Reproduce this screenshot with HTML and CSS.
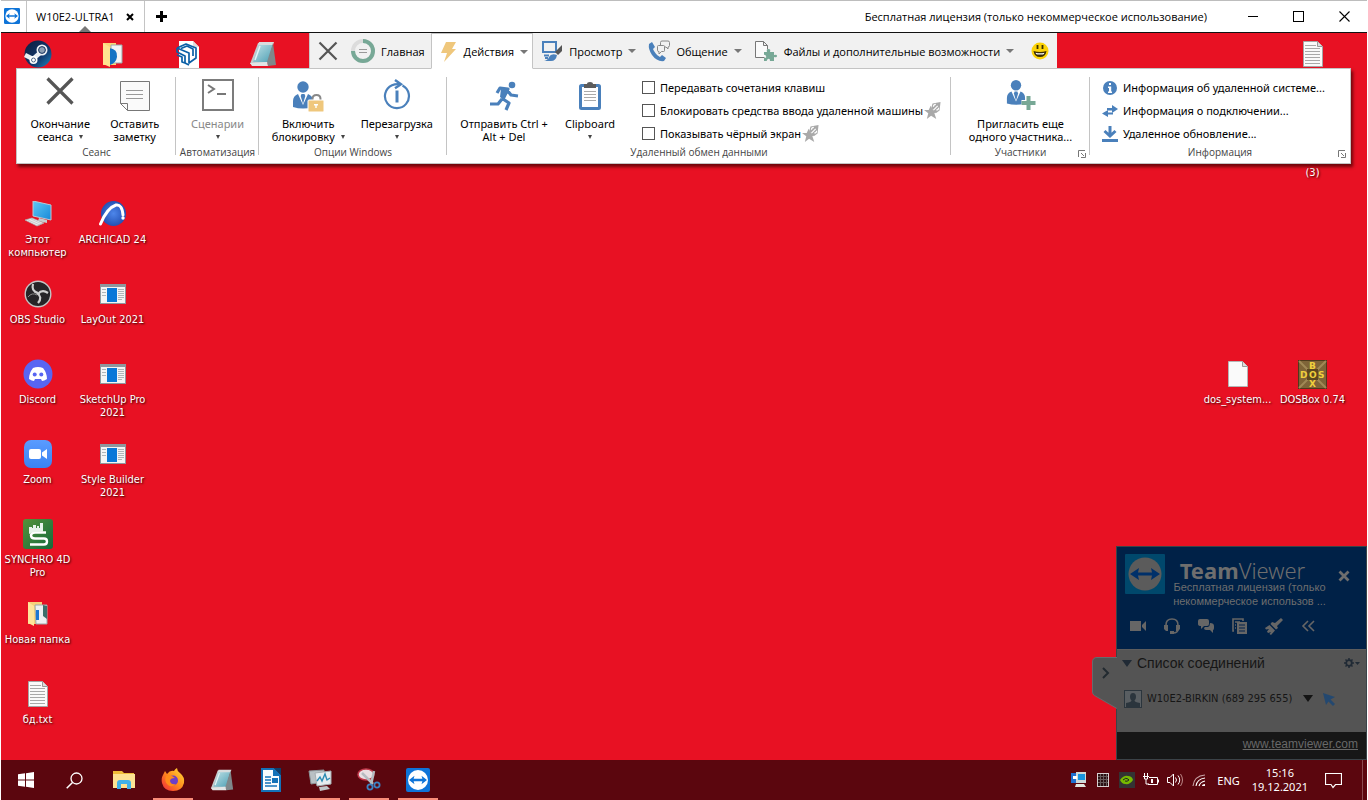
FILE: index.html
```html
<!DOCTYPE html>
<html lang="ru">
<head>
<meta charset="utf-8">
<title>W10E2-ULTRA1</title>
<link rel="stylesheet" href="styles.css">
</head>
<body>
<svg class="defs" aria-hidden="true">
  <defs>
    <linearGradient id="discGrad" x1="0" y1="0" x2="1" y2="1"><stop offset="0" stop-color="#0d1c3c"/><stop offset=".6" stop-color="#12386c"/><stop offset="1" stop-color="#1b8ac4"/></linearGradient>
    <linearGradient id="screenGrad" x1="0" y1="0" x2="1" y2="1"><stop offset="0" stop-color="#5fc8f5"/><stop offset="1" stop-color="#1788d8"/></linearGradient>
    <linearGradient id="noteGrad" x1="0" y1="0" x2="1" y2="1"><stop offset="0" stop-color="#c4e4e8"/><stop offset="1" stop-color="#4d9fb4"/></linearGradient>
    <linearGradient id="zoomGrad" x1="0" y1="0" x2="0" y2="1"><stop offset="0" stop-color="#5a9cff"/><stop offset="1" stop-color="#3a82f2"/></linearGradient>
    <linearGradient id="foxGrad" x1="1" y1="0" x2="0" y2="1"><stop offset="0" stop-color="#ffe03a"/><stop offset=".5" stop-color="#ff8a1c"/><stop offset="1" stop-color="#f0243f"/></linearGradient>
    <linearGradient id="synGrad" x1="0" y1="0" x2="1" y2="1"><stop offset="0" stop-color="#55923a"/><stop offset="1" stop-color="#156a3c"/></linearGradient>
    <radialGradient id="archGrad"><stop offset="0" stop-color="#4d86ea"/><stop offset="1" stop-color="#2451b4"/></radialGradient>
  </defs>
  <symbol id="logo" viewBox="0 0 24 24"><rect width="24" height="24" rx="2" fill="#0e74d8"/><circle cx="12" cy="12" r="10" fill="#fff"/><path d="M3 12l5.500-4.200-.9 3h8.800l-.9-3L21 12l-5.500 4.200.9-3H7.600l.9 3z" fill="#0e74d8"/></symbol>
  <symbol id="appwin" viewBox="0 0 26 20"><rect x=".5" y=".5" width="25" height="19" fill="#f4f4f4" stroke="#8e979d"/><path d="M1 2h24" stroke="#8e979d" stroke-width="2"/><rect x="7" y="4" width="10" height="14" fill="#0a78d8"/><path d="M2 5.500h4M2 8.500h4M2 11.500h4M18 5.500h6M18 7.500h6M18 9.500h6M18 11.500h6M18 13.500h6M18 15.500h4" stroke="#b0b5b8"/></symbol>
  <symbol id="textfile" viewBox="0 0 20 26"><path d="M.5.5h14l5 5v20H.5z" fill="#fafafa" stroke="#a5a5a5"/><path d="M14.500.5v5h5" fill="#ddd" stroke="#999"/><path d="M2 4.500h11M2 7.500h15M2 10.500h15M2 13.500h15M2 16.500h15M2 19.500h15M2 22.500h15" stroke="#a9a9a9"/></symbol>
  <symbol id="notepad" viewBox="0 0 28 28"><path d="M9 3h13l-3 20L1 24z" fill="#c5c9cb"/><path d="M10 4h14l-5 18H4z" fill="url(#noteGrad)"/><path d="M10 2h15l-1 3H9z" fill="#d9dcdd"/><path d="M24 3l3 22-8 1-1-4z" fill="#7f878a"/><path d="M1 23l17-1 1 4H3z" fill="#e2e4e4"/><path d="M11 6l-5 14" stroke="#e4f4f5" stroke-width="1.500"/></symbol>
  <symbol id="user" viewBox="0 0 22 28"><circle cx="11" cy="6" r="5.700" fill="#4a80bb"/><path d="M1 26v-6q0-5 5-7l5 11 5-11q5 2 5 7v6q-10 3-20 0z" fill="#4a80bb"/><path d="M9.500 13h3l.8 2-2.300 8-2.300-8z" fill="#4a80bb"/></symbol>
  <symbol id="launch" viewBox="0 0 8 8"><path d="M.5 7V.5H7" fill="none" stroke="#777"/><path d="M3 3l3 3M7.500 3v4.500H3" fill="none" stroke="#777"/></symbol>
  <symbol id="nostar" viewBox="0 0 18 18"><path d="M7 4l2 4.500h6L11 12l2 6-5.500-3.500L3 18l1.500-6L0 8.500h5z" fill="#a9a9a9"/><path d="M9 1.500L17.500 0l-1 9-4 3-5-5z" fill="#a9a9a9"/><path d="M10 8.500L14.500 4M10 5q0-2.500 2.500-2.500M15.500 6q0 2.500-2.500 2.500" stroke="#fff" stroke-width="1.200" fill="none"/></symbol>
</svg>

<header class="titlebar">
  <svg class="app-logo" width="16" height="16"><use href="#logo"/></svg>
  <div class="session-tab">
    <span>W10E2-ULTRA1</span>
    <button class="plain" aria-label="Закрыть вкладку"><svg width="8" height="8"><path d="M1 1l6 6M7 1L1 7" stroke="#000" stroke-width="2"/></svg></button>
  </div>
  <button class="plain add" aria-label="Новая вкладка"><svg width="11" height="11"><path d="M5.500 0v11M0 5.500h11" stroke="#000" stroke-width="3"/></svg></button>
  <p class="license">Бесплатная лицензия (только некоммерческое использование)</p>
  <button class="plain win" aria-label="Свернуть"><svg width="11" height="11"><path d="M1 5.500h10" stroke="#000"/></svg></button>
  <button class="plain win" aria-label="Развернуть"><svg width="11" height="11"><rect x=".5" y=".5" width="10" height="10" fill="none" stroke="#000"/></svg></button>
  <button class="plain win" aria-label="Закрыть"><svg width="11" height="11"><path d="M.5.5l10 10M10.500.5l-10 10" stroke="#000" stroke-width="1.100"/></svg></button>
</header>

<main class="desktop">
  <section class="icons left-icons">
    <figure class="r1 c1"><svg width="28" height="28" viewBox="0 0 28 28"><circle cx="14" cy="14" r="13.500" fill="url(#discGrad)"/><path d="M1 15l8 4 8-7" stroke="#e9eef3" stroke-width="4.500" fill="none"/><circle cx="9.500" cy="20" r="4" fill="#fff"/><circle cx="18" cy="10" r="5.500" fill="#eef2f5"/><circle cx="18" cy="10" r="3.400" fill="#8d9fb3" stroke="#12305c"/><circle cx="9.500" cy="20" r="2" fill="#fff" stroke="#27476f" stroke-width=".8"/></svg></figure>
    <figure class="r1 c2"><svg width="20" height="26" viewBox="0 0 20 26"><path d="M0 2h13v22H0z" fill="#fbd777"/><path d="M8 4h11v18H8z" fill="#f2f4f5" stroke="#9aa"/><path d="M6 7q9 1 8 9-1 6-7 8z" fill="#1272c4"/><path d="M0 2l7 4v20l-7-3z" fill="#ffe391"/></svg></figure>
    <figure class="r1 c3"><svg width="24" height="28" viewBox="0 0 24 28"><path d="M3 1h14l6 6v21H3z" fill="#fff"/><path d="M17 1v6h6" fill="#ddd"/><g fill="none" stroke="#0a5fa6" stroke-width="1.700" stroke-linejoin="round"><path d="M1 8l9-4 10 4v10l-7 5v-4"/><path d="M1 8v4l8 4v7l4 2M1 8l12 5v6M5 8.500l6-2.500 6 3v7M1 15l5 2v5l3 1"/></g></svg></figure>
    <figure class="r1 c4"><svg width="28" height="28"><use href="#notepad"/></svg></figure>

    <figure class="r3 c1"><svg width="28" height="26" viewBox="0 0 28 26"><path d="M9 0l18 4v15L9 15z" fill="url(#screenGrad)" stroke="#b7cbd6"/><path d="M15 17l8 2v3l-9-2z" fill="#c7ccce"/><path d="M1 19l7-2 12 5-7 3z" fill="#e7e9ea" stroke="#a8adb0" stroke-width=".7"/><path d="M4 19l12 5M7 18l11 5" stroke="#b4b9bb" stroke-width=".6"/></svg><figcaption>Этот компьютер</figcaption></figure>
    <figure class="r4 c1"><svg width="28" height="28" viewBox="0 0 28 28"><circle cx="14" cy="14" r="12.800" fill="#262427" stroke="#c4c4c4" stroke-width="1.400"/><g fill="none" stroke="#cfcfcf" stroke-width="2.200"><path d="M9 4q-2 7 5 9"/><path d="M24 13q-6-4-10 1"/><path d="M13 13q6 4 1 10"/></g><path d="M4 17q4-5 9-2" stroke="#8a8a8a" fill="none"/></svg><figcaption>OBS Studio</figcaption></figure>
    <figure class="r5 c1"><svg width="30" height="30" viewBox="0 0 30 30"><circle cx="15" cy="15" r="14.500" fill="#5865f2"/><path d="M10 9q5-2 10 0 4 5 4 11-3 2-5 2l-1-2h-6l-1 2q-2 0-5-2 0-6 4-11z" fill="#fff"/><circle cx="11.700" cy="15.500" r="2" fill="#5865f2"/><circle cx="18.300" cy="15.500" r="2" fill="#5865f2"/></svg><figcaption>Discord</figcaption></figure>
    <figure class="r6 c1"><svg width="28" height="28" viewBox="0 0 28 28"><rect width="28" height="28" rx="7" fill="url(#zoomGrad)"/><rect x="5" y="9" width="12" height="10" rx="2" fill="#fff"/><path d="M18 12.500l5-3.500v10l-5-3.500z" fill="#fff"/></svg><figcaption>Zoom</figcaption></figure>
    <figure class="r7 c1"><svg width="30" height="30" viewBox="0 0 30 30"><rect width="30" height="30" rx="3" fill="url(#synGrad)"/><path d="M23 13.500H12q-4 0-4 3t4 3h9q3 0 3 3T21 25.500H7" fill="none" stroke="#fff" stroke-width="2.400"/><path d="M6 15V8h3v1h1V6h3v3h1V7h2v2h1V4h3v9h-8q-4 0-6 2z" fill="#e8f2ea"/></svg><figcaption>SYNCHRO 4D Pro</figcaption></figure>
    <figure class="r8 c1"><svg width="20" height="26" viewBox="0 0 20 26"><path d="M0 1h14v22H0z" fill="#f6d27a"/><path d="M7 4h12v19H8z" fill="#eef1f2" stroke="#9aa"/><path d="M15 4l4 1v13l-4-3z" fill="#3c6f6b"/><path d="M8 9h3v10H8z" fill="#1d78d2"/><path d="M0 1l6 4v20l-6-3z" fill="#ffe59b"/></svg><figcaption>Новая папка</figcaption></figure>
    <figure class="r9 c1"><svg width="20" height="26"><use href="#textfile"/></svg><figcaption>бд.txt</figcaption></figure>

    <figure class="r3 c2"><svg width="28" height="28" viewBox="0 0 28 28"><circle cx="14.500" cy="13.500" r="12.500" fill="url(#archGrad)"/><path d="M1.500 24Q8 8 17 5q6-1 7 10" fill="none" stroke="#fff" stroke-width="3" stroke-linecap="round"/><circle cx="24" cy="18" r="1.700" fill="#fff"/></svg><figcaption>ARCHICAD 24</figcaption></figure>
    <figure class="r4 c2"><svg width="26" height="20"><use href="#appwin"/></svg><figcaption>LayOut 2021</figcaption></figure>
    <figure class="r5 c2"><svg width="26" height="20"><use href="#appwin"/></svg><figcaption>SketchUp Pro 2021</figcaption></figure>
    <figure class="r6 c2"><svg width="26" height="20"><use href="#appwin"/></svg><figcaption>Style Builder 2021</figcaption></figure>
  </section>

  <section class="icons right-icons">
    <figure class="r1 c2"><svg width="20" height="26"><use href="#textfile"/></svg></figure>
    <figure class="r2 c2 tail"><figcaption>(3)</figcaption></figure>
    <figure class="r5 c1"><svg width="20" height="26" viewBox="0 0 20 26"><path d="M.5.5h14l5 5v20H.5z" fill="#fafafa" stroke="#b5b5b5"/><path d="M14.500.5v5h5" fill="#ddd" stroke="#999"/></svg><figcaption>dos_system...</figcaption></figure>
    <figure class="r5 c2"><svg class="dosbox" width="29" height="29" viewBox="0 0 29 29"><rect x=".5" y=".5" width="28" height="28" fill="#7e6438" stroke="#4d3a1c"/><path d="M1 1l27 27M28 1L1 28" stroke="#a08955" stroke-width="2"/><rect x="9" y="9" width="11" height="11" fill="#5c471f"/><text x="11" y="9">B</text><text x="2" y="18">D</text><text x="11" y="18">O</text><text x="20" y="18">S</text><text x="11" y="27">X</text></svg><figcaption>DOSBox 0.74</figcaption></figure>
  </section>

  <nav class="tabs">
    <button class="tab tab-close" aria-label="Закрыть"><svg width="20" height="20" viewBox="0 0 20 20"><path d="M1.500 1.500l17 17M18.500 1.500l-17 17" stroke="#555" stroke-width="2.200"/></svg></button>
    <button class="tab home"><svg width="24" height="24" viewBox="0 0 24 24"><circle cx="12" cy="12" r="10" fill="none" stroke="#dcdcdc" stroke-width="4"/><path d="M12 2a10 10 0 1 1-10 10" fill="none" stroke="#77a896" stroke-width="4"/><path d="M8 10.500h8M8 13.500h8" stroke="#999"/></svg><span>Главная</span></button>
    <button class="tab active"><svg width="18" height="20" viewBox="0 0 18 20"><path d="M6 0h10l-4 7h4L4 20l3-9H1z" fill="#efc77c"/></svg><span>Действия</span><i class="caret"></i></button>
    <button class="tab"><svg width="22" height="22" viewBox="0 0 22 22"><rect x="2" y="2" width="13" height="10" fill="none" stroke="#4a80bb" stroke-width="2"/><path d="M3 21q4-1 5-4 2-4 8-2-1 6-6 6z" fill="#4a80bb"/><path d="M3 15.500h5M4 18h3" stroke="#4a80bb" stroke-width="2"/><path d="M14 12l7-7v6l-4 4z" fill="#555"/></svg><span>Просмотр</span><i class="caret"></i></button>
    <button class="tab"><svg width="22" height="22" viewBox="0 0 22 22"><path d="M1 4l3-2 3 5-2 2q2 5 7 8l2-2 4 3-2 3Q9 22 4 15 0 9 1 4z" fill="#4a80bb"/><g fill="#f1f1f1" stroke="#888"><path d="M12.500 2.500q0-1.500 1.500-1.500h6q1.500 0 1.500 1.500v3Q21.500 7 20 7v2l-2-2h-4q-1.500 0-1.500-1.500z"/><path d="M9.500 6.500q0-1 1-1h5q1 0 1 1v4q0 1-1 1h-2L11 14v-2.500q-1.500 0-1.500-1z"/></g></svg><span>Общение</span><i class="caret"></i></button>
    <button class="tab"><svg width="24" height="22" viewBox="0 0 24 22"><path d="M10.500 17.500h-9v-16h8l4 4v4M9.500 1.500v4h4" fill="#fafafa" stroke="#777"/><path d="M10 12h3q-1-3 1.500-3t1.500 3h4v3q3-1 3 1t-3 1v4h-4q0-3-2-2t-1 2h-3v-3q3 0 2-2t-2-1z" fill="#77a896"/></svg><span>Файлы и дополнительные возможности</span><i class="caret"></i></button>
    <button class="tab smile" aria-label="Отзыв"><svg width="18" height="18" viewBox="0 0 18 18"><circle cx="9" cy="9" r="8.500" fill="#fcd307"/><path d="M6.500 3v4M11.500 3v4" stroke="#3b3000" stroke-width="1.800"/><path d="M2.500 9q1 6 6.500 6t6.500-6q-6.500 2-13 0z" fill="#3b2c00"/><path d="M4.500 10.700q4.500 1.200 9 0-.5 1.400-1.500 1.800H6q-1-.4-1.500-1.800z" fill="#fff"/></svg></button>
  </nav>

  <section class="ribbon">
    <div class="group g-session">
      <div class="tools">
        <button class="big"><svg width="28" height="28" viewBox="0 0 28 28"><path d="M1.500 1.500l25 25M26.500 1.500l-25 25" stroke="#555" stroke-width="3.200"/></svg><span>Окончание<br>сеанса<i class="dot"></i></span></button>
        <button class="big"><svg class="low" width="30" height="30" viewBox="0 0 30 30"><path d="M.5.5h29v29h-22l-7-7z" fill="#fafafa" stroke="#777"/><path d="M.5 22.500h7v7" fill="none" stroke="#777"/><path d="M6 9.500h17M6 13.500h17M6 17.500h17" stroke="#999"/></svg><span>Оставить<br>заметку</span></button>
      </div>
      <h2>Сеанс</h2>
    </div>
    <div class="group g-auto">
      <div class="tools">
        <button class="big off"><svg class="mid" width="32" height="32" viewBox="0 0 32 32"><rect x="1" y="1" width="30" height="30" fill="#fff" stroke="#7c7c7c" stroke-width="2"/><path d="M6 6l6 4-6 4M15 15h9" fill="none" stroke="#777" stroke-width="2"/></svg><span>Сценарии<br><i class="dot alone"></i></span></button>
      </div>
      <h2>Автоматизация</h2>
    </div>
    <div class="group g-windows">
      <div class="tools">
        <button class="big"><svg class="low" width="32" height="32" viewBox="0 0 32 32"><use href="#user" x="0" y="0" width="22" height="28"/><path d="M20.500 21v-3q0-4 4-4t4 4v3" fill="none" stroke="#888" stroke-width="2"/><rect x="16" y="19" width="16" height="12" rx="1" fill="#efc77c" stroke="#fff"/><path d="M22 23h4v1.500h-1.300V27h-1.400v-2.500H22z" fill="#fff"/></svg><span>Включить<br>блокировку<i class="dot"></i></span></button>
        <button class="big"><svg class="mid" width="28" height="32" viewBox="0 0 28 32"><path d="M19.500 6.500a12 12 0 1 1-10.500-.3Q12 5 16 5.200" fill="none" stroke="#4a80bb" stroke-width="2.200"/><path d="M12 1l6 4.200-6 4" fill="none" stroke="#4a80bb" stroke-width="2.400"/><path d="M14 11.500v12" stroke="#4a80bb" stroke-width="3"/></svg><span>Перезагрузка<br><i class="dot alone"></i></span></button>
      </div>
      <h2>Опции Windows</h2>
    </div>
    <div class="group g-remote">
      <div class="tools">
        <button class="big send"><svg class="low" width="30" height="32" viewBox="0 0 30 32"><circle cx="23" cy="4" r="3.300" fill="#4a80bb"/><path d="M8 12l3-5 8 1-5 10 6 4-3 7M13 18l-4 5H1M18 9l4 5 7 1" fill="none" stroke="#4a80bb" stroke-width="3.200" stroke-linejoin="round"/><path d="M12 8l7 1-4 10-4-3z" fill="#4a80bb"/></svg><span>Отправить Ctrl +<br>Alt + Del</span></button>
        <button class="big clip"><svg class="low" width="22" height="30" viewBox="0 0 22 30"><rect x="1.500" y="4.500" width="19" height="23" rx="1" fill="#fff" stroke="#4a80bb" stroke-width="3"/><path d="M5 3h3q0-2 3-2t3 2h3v4H5z" fill="#5c5c5c"/><path d="M5 10.500h12M5 13.500h12M5 16.500h12M5 19.500h12" stroke="#aaa"/></svg><span>Clipboard<br><i class="dot alone"></i></span></button>
        <div class="stack checks">
          <label><input type="checkbox">Передавать сочетания клавиш</label>
          <label><input type="checkbox">Блокировать средства ввода удаленной машины<svg width="17" height="17"><use href="#nostar"/></svg></label>
          <label><input type="checkbox">Показывать чёрный экран<svg width="17" height="17"><use href="#nostar"/></svg></label>
        </div>
      </div>
      <h2>Удаленный обмен данными</h2>
    </div>
    <div class="group g-people">
      <div class="tools">
        <button class="big"><svg class="mid" width="30" height="32" viewBox="0 0 30 32"><use href="#user" x="0" y="0" width="20" height="27"/><path d="M22.500 17v14M15.500 24h14" stroke="#fff" stroke-width="6"/><path d="M22.500 17v14M15.500 24h14" stroke="#77a896" stroke-width="4"/></svg><span>Пригласить еще<br>одного участника...</span></button>
      </div>
      <h2>Участники</h2>
      <button class="plain launcher" aria-label="Участники: параметры"><svg width="8" height="8"><use href="#launch"/></svg></button>
    </div>
    <div class="group g-info">
      <div class="tools">
        <div class="stack">
          <button class="plain line"><svg width="16" height="16" viewBox="0 0 16 16"><circle cx="8" cy="8" r="7" fill="#4a80bb"/><path d="M7 3h2v2H7zM6 6.500h3.200v5H10V13H6v-1.500h1V8H6z" fill="#fff"/></svg>Информация об удаленной системе...</button>
          <button class="plain line"><svg width="16" height="16" viewBox="0 0 16 16"><path d="M5 5h5V2l6 4-6 4V7.500H5zM11 9.500H6V7L0 10.500 6 14v-2.500h5z" fill="#4a80bb"/></svg>Информация о подключении...</button>
          <button class="plain line"><svg width="16" height="16" viewBox="0 0 16 16"><path d="M0 14.500h16" stroke="#4a80bb" stroke-width="3"/><path d="M8 0v10M2.500 5L8 10l5.500-5" fill="none" stroke="#4a80bb" stroke-width="3"/></svg>Удаленное обновление...</button>
        </div>
      </div>
      <h2>Информация</h2>
      <button class="plain launcher" aria-label="Информация: параметры"><svg width="8" height="8"><use href="#launch"/></svg></button>
    </div>
  </section>

  <aside class="panel">
    <button class="plain handle" aria-label="Свернуть панель"><svg width="25" height="54" viewBox="0 0 25 54"><path d="M25 .5H5Q.5.5.5 5v30q0 2 2 3.500L25 51.500" fill="#545454" stroke="#676b6e"/><path d="M11 11l5 5-5 5" fill="none" stroke="#222a30" stroke-width="2"/></svg></button>
    <div class="panel-head">
      <div class="brand">
        <svg width="40" height="40" viewBox="0 0 40 40"><rect width="40" height="40" rx="1" fill="#00486c"/><circle cx="20" cy="20" r="16.500" fill="#5b5b5b"/><path d="M5 20l9-6-1 4.500h14L26 14l9 6-9 6 1-4.500H13l1 4.500z" fill="#00306a"/></svg>
        <div class="brand-text"><strong>Team<em>Viewer</em></strong><p>Бесплатная лицензия (только<br>некоммерческое использов ...</p></div>
        <button class="plain" aria-label="Закрыть панель"><svg width="12" height="12"><path d="M1.500 1.500l9 9M10.500 1.500l-9 9" stroke="#6e6e6e" stroke-width="2.800"/></svg></button>
      </div>
      <div class="panel-tools">
        <button class="plain" aria-label="Видео"><svg width="18" height="18" viewBox="0 0 18 18"><path d="M1 4h11v10H1zM13 8l4-4v10l-4-4z" fill="#666"/></svg></button>
        <button class="plain" aria-label="Звук"><svg width="18" height="18" viewBox="0 0 18 18"><path d="M3 10V8q0-6 6-6t6 6v2M15 12q0 4-5 4" fill="none" stroke="#666" stroke-width="1.600"/><path d="M1 8h4v6H3l-2-2zM13 8h4v4l-2 2h-2zM7 14h4v3H7z" fill="#666"/></svg></button>
        <button class="plain" aria-label="Чат"><svg width="18" height="18" viewBox="0 0 18 18"><path d="M3 2h7q2 0 2 2v3q0 2-2 2H7l-3 3V9Q1 9 1 7V4q0-2 2-2z" fill="#666"/><path d="M13 6q4 0 4 3v2q0 2-1 2v3l-3-3H9q-2 0-2-2l1-1h3q2-1 2-4z" fill="#666"/></svg></button>
        <button class="plain" aria-label="Файлы"><svg width="18" height="18" viewBox="0 0 18 18"><path d="M3 14H2V2h10v2M4 5h5M4 8h1M4 11h1" fill="none" stroke="#666" stroke-width="1.600"/><path d="M6 5h10v12H6z" fill="#666"/><path d="M8 8h6M8 11h6M8 14h6" stroke="#00214a"/></svg></button>
        <button class="plain" aria-label="Доска"><svg width="18" height="18" viewBox="0 0 18 18"><path d="M16 1l2 2-6 6 1 2-2 1.500L5.500 7 7 5l3 1zM4.500 8l5.500 5.500L6 18l-1.500-1L6 15l-3 1-1-1.500L4 12l-3 .5L0 11z" fill="#666"/></svg></button>
        <button class="plain" aria-label="Свернуть"><svg width="18" height="18" viewBox="0 0 18 18"><path d="M9 4L4 9l5 5M15 4l-5 5 5 5" fill="none" stroke="#666" stroke-width="1.600"/></svg></button>
      </div>
    </div>
    <div class="panel-list">
      <div class="list-head"><svg width="10" height="8"><path d="M0 1h10L5 8z" fill="#202a35"/></svg><h3>Список соединений</h3><button class="plain" aria-label="Настройки"><svg width="16" height="10" viewBox="0 0 16 10"><circle cx="5" cy="5" r="2.800" fill="none" stroke="#202a35" stroke-width="1.800"/><path d="M5 0v2M5 8v2M0 5h2M8 5h2M1.500 1.500l1.500 1.500M7 7l1.500 1.500M8.500 1.500L7 3M3 7L1.500 8.500" stroke="#202a35" stroke-width="1.500"/><path d="M11 4h5l-2.500 3z" fill="#202a35"/></svg></button></div>
      <div class="list-row"><svg width="18" height="18" viewBox="0 0 18 18"><rect x=".5" y=".5" width="17" height="17" fill="#595e62" stroke="#2b353d"/><path d="M9 3q3 0 3 4 0 2-1.500 3.500 0 1.500 5.500 2.500v4H2v-4q5.500-1 5.500-2.500Q6 9 6 7q0-4 3-4z" fill="#2b353d"/></svg><span>W10E2-BIRKIN (689 295 655)</span><button class="plain" aria-label="Меню"><svg width="10" height="8"><path d="M0 0h10L5 7z" fill="#141414"/></svg></button><button class="plain" aria-label="Управление"><svg width="12" height="13" viewBox="0 0 12 13"><path d="M0 0l12 4-4.500 2.500L12 11l-2 2-4.500-4.500L3 12z" fill="#24486f"/></svg></button></div>
    </div>
    <footer><a href="#">www.teamviewer.com</a></footer>
  </aside>
</main>

<footer class="taskbar">
  <button class="plain task" aria-label="Пуск"><svg width="16" height="16" viewBox="0 0 16 16"><path d="M0 2.300l7-1v6.200H0zM8 1.200L16 0v7.500H8zM0 8.500h7v6.200l-7-1zM8 8.500h8V16l-8-1.200z" fill="#fff"/></svg></button>
  <button class="plain task" aria-label="Поиск"><svg width="17" height="17" viewBox="0 0 17 17"><circle cx="10.500" cy="6.500" r="5.500" fill="none" stroke="#fff" stroke-width="1.300"/><path d="M6.500 10.500L.7 16.300" stroke="#fff" stroke-width="1.500"/></svg></button>
  <button class="plain task" aria-label="Проводник"><svg width="22" height="20" viewBox="0 0 22 20"><path d="M0 1h9l2 2h10v15H0z" fill="#f0bd3a"/><path d="M0 4h22v14H0z" fill="#fde293"/><path d="M4 18v-5q0-3 3-3h8q3 0 3 3v6h-4v-5H8v5H4z" fill="#3fb0ea"/></svg></button>
  <button class="plain task open" aria-label="Firefox"><svg width="24" height="24" viewBox="0 0 24 24"><path d="M2 7l2-4 2 3q3-4 7-3 1-2 3-3 0 3 3 5 5 4 4 10-2 8-11 8T1 15Q0 10 2 7z" fill="url(#foxGrad)"/><circle cx="12" cy="12.500" r="5" fill="#6b3fc8"/><path d="M5 8q3-2 6 0l3 2q-5 0-5 3 1 4 6 3-4 4-8 1T5 8z" fill="#ff8b1a"/></svg></button>
  <button class="plain task" aria-label="Блокнот"><svg width="24" height="24"><use href="#notepad"/></svg></button>
  <button class="plain task" aria-label="Writer"><svg width="20" height="24" viewBox="0 0 20 24"><path d="M0 0h13l7 7v17H0z" fill="#1472b8"/><path d="M2 2h10v6h6v14H2z" fill="#f7fafc"/><path d="M13 0h7v7z" fill="#0c3f6c"/><path d="M4 9h6M4 12h6M4 15h6M4 18h12" stroke="#1472b8" stroke-width="1.600"/><rect x="11" y="10" width="6" height="5" fill="#1472b8"/></svg></button>
  <button class="plain task open" aria-label="Монитор"><svg width="24" height="24" viewBox="0 0 24 24"><path d="M1 3l15-1v12L3 16z" fill="#b9c0c4" stroke="#8b9397"/><path d="M7 5l16-2v13L9 18z" fill="#e6ecef" stroke="#a6adb1"/><path d="M9 13l3-4 2 4 3-7 2 6 3-2" fill="none" stroke="#2b8bb4" stroke-width="1.400"/><path d="M11 19l8-1 3 3-10 2z" fill="#c0c5c8"/></svg></button>
  <button class="plain task open" aria-label="Ножницы"><svg width="24" height="24" viewBox="0 0 24 24"><ellipse cx="9" cy="6.500" rx="8" ry="5.500" fill="#eadfe2" stroke="#c1384a" stroke-width="1.500"/><path d="M5 5l11 11M17 3l-3 14" stroke="#b5bcc1" stroke-width="2.500"/><circle cx="13" cy="19" r="2.600" fill="none" stroke="#3b83c4" stroke-width="1.800"/><circle cx="20" cy="17" r="2.600" fill="none" stroke="#3b83c4" stroke-width="1.800"/></svg></button>
  <button class="plain task open" aria-label="TeamViewer"><svg width="24" height="24"><use href="#logo"/></svg></button>

  <div class="tray">
    <svg width="16" height="16" viewBox="0 0 16 16"><rect x="0" y="1" width="9" height="10" fill="#1f6fd0"/><rect x="5" y="0" width="10" height="11" fill="#cfd8d8"/><rect x="7" y="2" width="7" height="6" fill="#1894e0"/><path d="M2 4h4v3H2z" fill="#fff"/><path d="M5 12h8l2 3H4z" fill="#e4e6df"/></svg>
    <svg width="16" height="16" viewBox="0 0 16 16"><rect x="2.500" y="1.500" width="11" height="13" fill="#2b1013" stroke="#d8d0d0"/><path d="M5.500 2v12M8.500 2v12M11.500 2v12M3 4.500h10M3 7.500h10M3 10.500h10" stroke="#665a5a"/></svg>
    <svg width="16" height="16" viewBox="0 0 16 16"><rect width="16" height="16" fill="#333"/><path d="M1 8q4-5 8-4 4 0 5 4-3 5-8 4-3 0-5-4z" fill="#76b900"/><path d="M4 8q3-3 5-1l1 1q-2 2-4 1" fill="none" stroke="#222"/></svg>
    <svg width="16" height="16" viewBox="0 0 16 16"><path d="M6 5.500h8.500v7H5M15.500 7.500v3M1.500 1v3M4.500 1v3M0 4.500h6M1.500 5v2h3V5M3 7v5h3" fill="none" stroke="#fff"/><rect x="8" y="7" width="2" height="4" fill="#fff"/></svg>
    <svg width="16" height="16" viewBox="0 0 16 16"><path d="M.5 5.500H3L6.500 2v12L3 10.500H.5zM8.500 5.500q2 2.500 0 5M11 3.500q3.500 4.500 0 9" fill="none" stroke="#fff"/><path d="M13.500 2q4 6 0 12" fill="none" stroke="#b88"/></svg>
    <svg width="16" height="16" viewBox="0 0 16 16"><g fill="none" stroke="#fff" stroke-width="1.100"><path d="M2 14Q3 4 14 3" stroke="#c9a5a8"/><path d="M5 14q1-7 9-8M8 14q1-4 6-5"/></g><path d="M11 14q0-2 3-2v2z" fill="#fff"/></svg>
    <span class="lang">ENG</span>
    <time>15:16<br>19.12.2021</time>
    <button class="plain" aria-label="Уведомления"><svg width="17" height="17" viewBox="0 0 17 17"><path d="M.5 1.500h16v11h-6l-2.500 3-2-3H.5z" fill="none" stroke="#fff" stroke-width="1.200"/></svg></button>
  </div>
</footer>
</body>
</html>
```
FILE: styles.css
```css
* { box-sizing: border-box; }

body {
  margin: 0;
  height: 100vh;
  display: flex;
  flex-direction: column;
  border: 0 solid #fff;
  border-width: 0 1px;
  overflow: hidden;
  font-family: "Open Sans", "Noto Sans", sans-serif;
  font-size: 11px;
  line-height: 13px;
  color: #000;
}

svg { display: block; flex: none; }
.defs { position: absolute; width: 0; height: 0; }
h2, h3, p, figure { margin: 0; font-weight: normal; }
button { font: inherit; color: inherit; border: 0; padding: 0; background: none; }
.plain { display: flex; align-items: center; justify-content: center; }

/* Title bar */
.titlebar {
  display: flex;
  align-items: stretch;
  height: 33px;
  background: #fff;
  border-top: 1px solid #bdbdbd;
  border-bottom: 1px solid #111;
}
.app-logo { margin: 7px 6px 0 3px; }
.session-tab {
  display: flex;
  align-items: center;
  gap: 11px;
  padding: 0 10px 0 9px;
  border: solid #c4c4c4;
  border-width: 0 1px;
  position: relative;
}
.session-tab::after {
  content: "";
  position: absolute;
  left: 50%;
  bottom: 0;
  transform: translateX(-50%);
  border: 6px solid transparent;
  border-bottom-color: #777;
  border-top: 0;
}
.add { width: 33px; }
.license { margin: 0 22px 0 auto; align-self: center; }
.win { width: 46px; }

/* Desktop */
.desktop { flex: 1; position: relative; background: #e81123; min-height: 0; }
.icons {
  position: absolute;
  top: 5px;
  display: grid;
  grid-auto-columns: 75px;
  grid-auto-rows: 80px;
}
.left-icons { left: -1px; }
.right-icons { right: 17px; }
.icons figure { display: grid; grid-template-rows: 32px auto; row-gap: 3px; place-items: center; align-content: start; }
.icons .tail { grid-template-rows: 45px auto; }
.icons .tail figcaption { grid-row: 2; }
figcaption {
  font-family: "DejaVu Sans Condensed", "DejaVu Sans", sans-serif;
  font-size: 11px;
  text-align: center;
  color: #fff;
  text-shadow: 1px 1px 2px #300;
}
.c1 { grid-column: 1; } .c2 { grid-column: 2; } .c3 { grid-column: 3; } .c4 { grid-column: 4; }
.r1 { grid-row: 1; } .r2 { grid-row: 2; } .r3 { grid-row: 3; } .r4 { grid-row: 4; } .r5 { grid-row: 5; }
.r6 { grid-row: 6; } .r7 { grid-row: 7; } .r8 { grid-row: 8; } .r9 { grid-row: 9; }
.dosbox text { font: bold 9px "DejaVu Sans", sans-serif; fill: #f0cf3c; }

/* Ribbon tabs */
.tabs {
  position: absolute;
  left: 308px;
  top: 0;
  display: flex;
  height: 36px;
  background: #f1f1f1;
  border-left: 1px solid #c8c8c8;
  z-index: 2;
}
.tab {
  display: flex;
  align-items: center;
  gap: 6px;
  padding: 1px 4px 0 8px;
  border-bottom: 1px solid #c4c4c4;
}
.tab.tab-close { padding-right: 6px; }
.tab.home { padding: 1px 6px 0 7px; }
.tab.active {
  background: #fff;
  border: 1px solid #c4c4c4;
  border-bottom-color: #fff;
}
.tab.smile { padding: 0 8px 0 13px; }
.caret { border: 4px solid transparent; border-top-color: #777; border-bottom: 0; }

/* Ribbon body */
.ribbon {
  position: absolute;
  left: 15px;
  right: 16px;
  top: 35px;
  display: grid;
  grid-template-columns: 159px 83px 188px 504px 139px 1fr;
  background: #fff;
  border: 1px solid #c4c4c4;
  box-shadow: 2px 3px 3px rgba(60, 0, 0, .7);
  font-family: "Noto Sans", sans-serif;
}
.group { position: relative; padding: 7px 0 4px; }
.group + .group::before {
  content: "";
  position: absolute;
  left: -1px;
  top: 8px;
  bottom: 8px;
  border-left: 1px solid #c4c4c4;
}
.tools { display: flex; height: 70px; white-space: nowrap; }
.group h2 { font: 10px/13px "Open Sans", "Noto Sans", sans-serif; text-align: center; color: #444; }
.big {
  flex: 1;
  display: grid;
  grid-template-rows: 36px 26px;
  row-gap: 5px;
  justify-items: center;
  align-content: start;
}
.big svg { margin-top: 1px; }
.big .mid { margin-top: 3px; }
.big .low { margin-top: 5px; }
.big.off { color: #888; }
.dot {
  display: inline-block;
  border: 2px solid transparent;
  border-top: 4px solid #444;
  border-bottom: 0;
  margin-left: 6px;
  vertical-align: 2px;
}
.dot.alone { margin-left: 0; }
.g-session .tools { padding: 0 4px 0 6px; }
.g-windows .tools { padding: 0 6px 0 5px; }
.send { flex: 0 0 114px; }
.clip { flex: 0 0 58px; }
.stack { display: flex; flex-direction: column; }
.stack label, .line { display: flex; align-items: center; height: 23px; gap: 5px; }
.line { justify-content: flex-start; }
.checks { margin-left: 23px; }
.checks input { appearance: none; width: 13px; height: 13px; margin: 0; border: 1px solid #555; background: #fff; }
.checks svg { margin-left: -4px; }
.g-info .tools { padding-left: 12px; }
.launcher { position: absolute; right: 4px; bottom: 5px; }

/* Session panel */
.panel {
  position: absolute;
  right: 0;
  bottom: 0;
  width: 251px;
  border: 1px solid #3b4348;
  color: #161616;
}
.handle { position: absolute; right: 100%; top: 110px; }
.panel-head { background: #002147; color: #6e6e6e; padding: 7px 8px 0; }
.brand { display: flex; }
.brand-text { flex: 1; text-align: center; font-family: "Liberation Sans", Arial, sans-serif; font-size: 11px; line-height: 14px; padding: 6px 0 0 4px; white-space: nowrap; }
.brand strong { display: block; font: bold 22px/20px "Noto Sans", sans-serif; padding-right: 14px; }
.brand em { font-style: normal; font-weight: 300; }
.brand button { width: 28px; height: 30px; margin-top: 7px; }
.panel-tools { display: flex; gap: 16px; padding: 9px 4px 14px; }
.panel-list { background: #545454; padding: 0 6px 23px 5px; border-top: 1px solid #5d5d5d; }
.list-head { display: flex; align-items: center; gap: 5px; height: 26px; }
.list-head h3 { font: 14px/18px "Liberation Sans", Arial, sans-serif; flex: 1; }
.list-row { display: flex; align-items: center; gap: 5px; padding: 14px 25px 1px 2px; }
.list-row span { flex: 1; font: 11px/18px "DejaVu Sans Condensed", "DejaVu Sans", sans-serif; white-space: nowrap; }
.list-row button:last-child { margin-left: 5px; }
.panel footer { background: #171717; text-align: right; padding: 4px 8px 7px; font: 12px/16px "Liberation Sans", Arial, sans-serif; }
.panel footer a { color: #686868; }

/* Taskbar */
.taskbar { display: flex; height: 40px; background: #5b060e; color: #fff; }
.task { width: 49px; position: relative; }
.task.open::after { content: ""; position: absolute; left: 5px; right: 4px; bottom: 0; height: 2px; background: #f98c79; }
.tray { display: flex; align-items: center; gap: 8px; margin-left: auto; margin-right: 4px; padding-right: 20px; border-right: 1px solid #8a4a50; font-family: "Noto Sans", sans-serif; }
.lang { margin-left: 2px; }
.tray time { text-align: center; line-height: 14px; margin: 0 9px 0 4px; }
```
